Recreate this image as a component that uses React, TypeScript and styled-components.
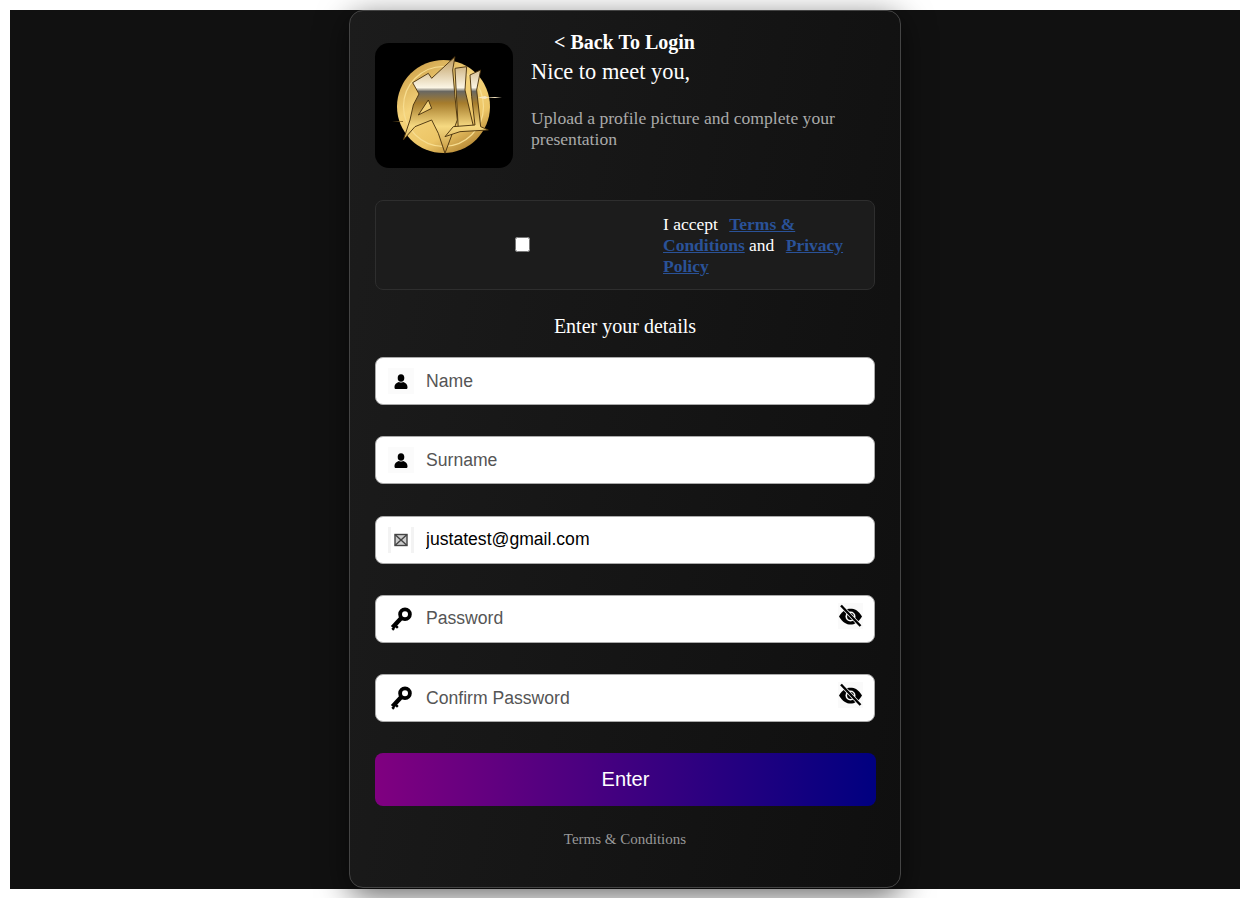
import React from "react";
import styled, { createGlobalStyle } from "styled-components";

const GlobalStyle = createGlobalStyle`
  html, body {
    margin: 0;
    background: #fff;
    overflow: hidden;
  }
  body {
    padding: 10px;
    height: 898px;
    box-sizing: border-box;
    font-family: "Liberation Serif", "Times New Roman", serif;
  }
`;

const Page = styled.div`
  background: #111;
  height: 879px;
  display: flex;
  justify-content: center;
`;

const Card = styled.main`
  box-sizing: border-box;
  width: 552px;
  height: 878px;
  padding: 32px 25px 0;
  border: 1px solid #444;
  border-radius: 14px;
  background: linear-gradient(100deg, #1c1c1c 0%, #0f0f0f 100%);
  box-shadow: 0 8px 32px rgba(0, 0, 0, 0.6);
  display: flex;
  flex-direction: column;
`;

const Header = styled.header`
  display: flex;
  gap: 18px;
`;

const LogoBox = styled.div`
  width: 138px;
  height: 125px;
  flex: none;
  border-radius: 14px;
  background: #000;
`;

const Intro = styled.div`
  flex: 1;
  margin-top: -12px;
`;

const BackLink = styled.a`
  display: block;
  margin-left: 23px;
  color: #fff;
  font-size: 20px;
  font-weight: 700;
  line-height: 22px;
`;

const Greeting = styled.h1`
  margin: 6px 0 0;
  color: #fff;
  font-size: 22.4px;
  font-weight: 400;
  line-height: 26px;
`;

const Subtitle = styled.p`
  margin: 23px 0 0;
  color: #aaa;
  font-size: 17.6px;
  line-height: 21px;
`;

const Agreement = styled.section`
  margin-top: 32px;
  height: 90px;
  box-sizing: border-box;
  border: 1px solid #2e2e2e;
  border-radius: 8px;
  background: #1c1c1c;
  display: grid;
  grid-template-columns: 1fr 202px;
  align-items: center;
  padding: 0 9px 0 5px;
`;

const CheckCell = styled.div`
  display: flex;
  justify-content: center;
  margin-top: -2px;
`;

const Check = styled.input`
  width: 15px;
  height: 15px;
  margin: 0;
`;

const AgreementText = styled.p`
  margin: 0;
  color: #fff;
  font-size: 17.5px;
  line-height: 21px;
`;

const PolicyLink = styled.a`
  margin-left: 7px;
  color: #2a5298;
  font-weight: 700;
  text-decoration: underline;
`;

const SectionTitle = styled.h2`
  margin: 25px 0 20px;
  color: #fff;
  font-size: 20px;
  font-weight: 400;
  line-height: 22px;
  text-align: center;
`;

const Fields = styled.div`
  display: flex;
  flex-direction: column;
  gap: 31.3px;
`;

const Field = styled.label`
  position: relative;
  height: 48px;
  box-sizing: border-box;
  border: 1px solid #aaa;
  border-radius: 8px;
  background: #fff;
  display: flex;
  align-items: center;
  padding: 0 12px;
  gap: 12px;
`;

const IconBox = styled.span<{ $tone?: "faint" | "strips" }>`
  width: 26px;
  height: 26px;
  box-sizing: border-box;
  flex: none;
  display: flex;
  align-items: center;
  justify-content: center;
  color: #000;
  background: ${(p) => (p.$tone === "faint" ? "#fbfbfb" : "transparent")};
  border-style: solid;
  border-color: #f3f3f3;
  border-width: ${(p) => (p.$tone === "strips" ? "0 3px" : "0")};
`;

const Input = styled.input`
  flex: 1;
  min-width: 0;
  border: 0;
  outline: 0;
  padding: 0;
  background: transparent;
  color: #000;
  font-family: "Liberation Sans", Arial, sans-serif;
  font-size: 17.6px;
  &::placeholder {
    color: #555;
    opacity: 1;
  }
`;

const EyeButton = styled.span`
  position: absolute;
  right: 11px;
  top: 7px;
  width: 25px;
  height: 26px;
  display: flex;
  align-items: center;
  justify-content: center;
  background: #fafafa;
`;

const SubmitButton = styled.button`
  margin-top: 31px;
  width: 501px;
  height: 53px;
  border: 0;
  border-radius: 8px;
  background: linear-gradient(90deg, #800080, #000080);
  color: #fff;
  font-family: "Liberation Sans", Arial, sans-serif;
  font-size: 20px;
`;

const FooterLink = styled.a`
  margin-top: 24px;
  color: #999;
  font-size: 15px;
  line-height: 18px;
  text-align: center;
`;

function Logo() {
  return (
    <svg width="138" height="125" viewBox="0 0 138 125">
      <defs>
        <linearGradient id="coin" x1="0.15" y1="0" x2="0.75" y2="1">
          <stop offset="0" stopColor="#c99c45" />
          <stop offset="0.4" stopColor="#f5d47c" />
          <stop offset="0.75" stopColor="#ecc566" />
          <stop offset="1" stopColor="#b08230" />
        </linearGradient>
        <linearGradient id="chrome" gradientUnits="userSpaceOnUse" x1="0" y1="110" x2="0" y2="400">
          <stop offset="0" stopColor="#bd9a5c" />
          <stop offset="0.32" stopColor="#fbf5e4" />
          <stop offset="0.36" stopColor="#6a6861" />
          <stop offset="0.48" stopColor="#a67c2c" />
          <stop offset="0.72" stopColor="#f6d981" />
          <stop offset="1" stopColor="#c4953d" />
        </linearGradient>
      </defs>
      <circle cx="68.5" cy="63.5" r="46.5" fill="url(#coin)" />
      <circle cx="68.5" cy="63.5" r="40" fill="none" stroke="#f7dd90" strokeWidth="1.2" />
      {/* coordinates below are taken from a 3x crop of the logo */}
      <g transform="translate(-15 -23) scale(0.3333)" stroke="#4a330d" strokeWidth="2.8" strokeLinejoin="round" fill="url(#chrome)">
        <path
          fillRule="evenodd"
          d="M130 360 L150 300 L160 255 L177 222 L158 188 L205 160 L215 175 L285 110 L278 150 L285 230 L292 300 L255 400 L235 340 L215 300 L165 320 Z M205 240 L175 285 L215 265 Z"
        />
        <path d="M285 145 L320 140 L315 210 L340 318 L295 328 L290 240 Z" />
        <path d="M330 165 L362 150 L350 210 L362 320 L385 330 L300 335 L255 350 L280 320 L345 315 L335 230 Z" />
      </g>
      <path d="M108 54.5 L120 54 L127 54.5 L120 55 Z M103 54.5 L110 53 L113 54.5 L110 56 Z" fill="#f6e6c0" />
      <path d="M17 78.5 L28 78 L28 79 Z" fill="#8a6a2c" />
    </svg>
  );
}

function PersonIcon() {
  return (
    <svg width="14" height="15" viewBox="0 0 14 15" fill="#000">
      <ellipse cx="7" cy="4" rx="3.3" ry="3.8" />
      <path d="M0.5 13.5 C0.5 10 2.5 8.8 5 8 C6 8.8 8 8.8 9 8 C11.5 8.8 13.5 10 13.5 13.5 C13.5 14.5 12.8 15 12 15 L2 15 C1.2 15 0.5 14.5 0.5 13.5 Z" />
    </svg>
  );
}

function MailIcon() {
  return (
    <svg width="14" height="14" viewBox="0 0 14 14" fill="#ccc" stroke="#444" strokeWidth="1.4">
      <rect x="1" y="1.5" width="12" height="11" />
      <path d="M1 1.5 L7 7 L13 1.5 M1 12.5 L7 7 L13 12.5" fill="none" />
    </svg>
  );
}

function KeyIcon() {
  return (
    <svg width="26" height="26" viewBox="0 0 26 26" fill="none" stroke="#000">
      <circle cx="17" cy="8.2" r="4.9" strokeWidth="3.8" />
      <path d="M13.5 11.8 L4.5 21.5" strokeWidth="4.4" />
      <path d="M7.5 19.5 L9.8 21.8 M4.2 22 L6 23.8" strokeWidth="2.4" />
    </svg>
  );
}

function EyeOffIcon() {
  return (
    <svg width="25" height="26" viewBox="0 0 25 26">
      <path d="M1 13.5 C4.5 7.5 8.5 5.8 12.5 5.8 C16.5 5.8 20.5 7.5 24 13.5 C20.5 19.5 16.5 21.6 12.5 21.6 C8.5 21.6 4.5 19.5 1 13.5 Z" fill="#000" />
      <circle cx="12.5" cy="13.5" r="5" fill="#fafafa" />
      <circle cx="12.5" cy="13.5" r="3.4" fill="#000" />
      <path d="M3 2.5 L22.5 23" stroke="#fafafa" strokeWidth="3.8" />
      <path d="M3 2.5 L22.5 23" stroke="#000" strokeWidth="2.4" />
    </svg>
  );
}

type FieldProps = {
  placeholder: string;
  icon: React.ReactNode;
  tone?: "faint" | "strips";
  value?: string;
  secret?: boolean;
};

function FormField({ placeholder, icon, tone, value, secret }: FieldProps) {
  return (
    <Field>
      <IconBox $tone={tone}>{icon}</IconBox>
      <Input
        type={secret ? "password" : "text"}
        placeholder={placeholder}
        defaultValue={value}
      />
      {secret && (
        <EyeButton>
          <EyeOffIcon />
        </EyeButton>
      )}
    </Field>
  );
}

export default function App() {
  return (
    <>
      <GlobalStyle />
      <Page>
        <Card>
          <Header>
            <LogoBox>
              <Logo />
            </LogoBox>
            <Intro>
              <BackLink>&lt; Back To Login</BackLink>
              <Greeting>Nice to meet you,</Greeting>
              <Subtitle>
                Upload a profile picture and complete your presentation
              </Subtitle>
            </Intro>
          </Header>

          <Agreement>
            <CheckCell>
              <Check type="checkbox" />
            </CheckCell>
            <AgreementText>
              I accept <PolicyLink>Terms &amp; Conditions</PolicyLink> and{" "}
              <PolicyLink>Privacy Policy</PolicyLink>
            </AgreementText>
          </Agreement>

          <SectionTitle>Enter your details</SectionTitle>

          <Fields>
            <FormField placeholder="Name" tone="faint" icon={<PersonIcon />} />
            <FormField placeholder="Surname" tone="faint" icon={<PersonIcon />} />
            <FormField
              placeholder="Email"
              tone="strips"
              value="justatest@gmail.com"
              icon={<MailIcon />}
            />
            <FormField placeholder="Password" secret icon={<KeyIcon />} />
            <FormField placeholder="Confirm Password" secret icon={<KeyIcon />} />
          </Fields>

          <SubmitButton>Enter</SubmitButton>
          <FooterLink>Terms &amp; Conditions</FooterLink>
        </Card>
      </Page>
    </>
  );
}
